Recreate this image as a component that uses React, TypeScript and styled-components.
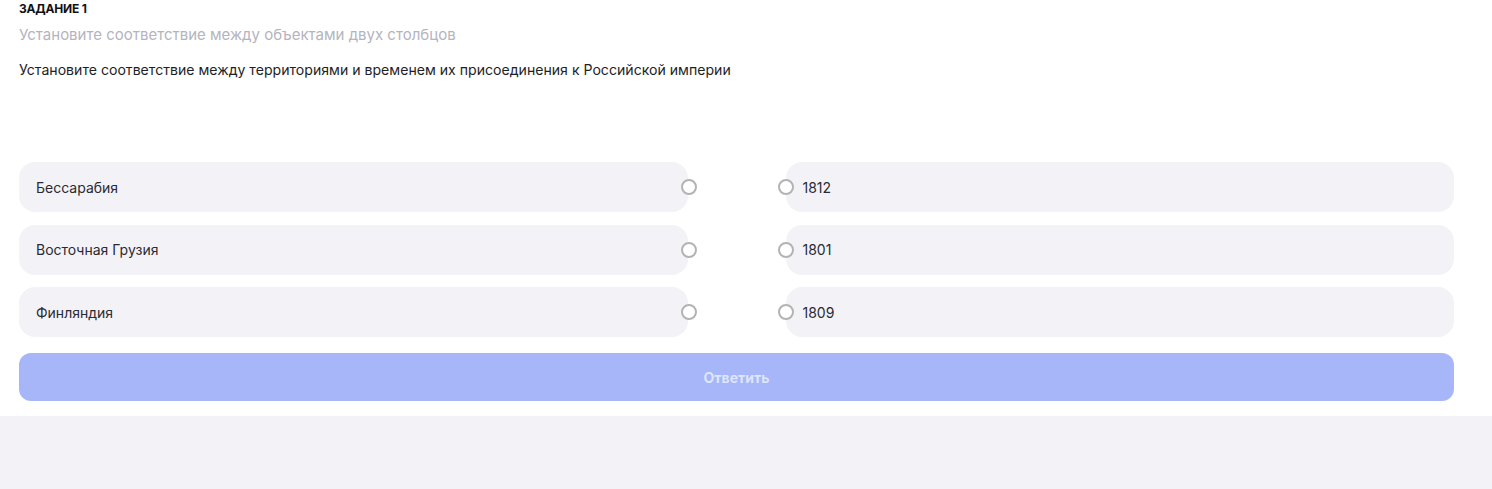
import React from "react";
import styled, { createGlobalStyle } from "styled-components";

const Global = createGlobalStyle`
  html, body { margin: 0; padding: 0; background: #f3f3f7; }
  body { font-family: Inter, "Noto Sans", sans-serif; }
`;

const Page = styled.div`
  min-height: 100vh;
  background: #f3f3f7;
`;

const Panel = styled.section`
  background: #ffffff;
  padding: 2px 38px 15px 19px;
`;

const Label = styled.div`
  font-size: 12px;
  font-weight: 700;
  line-height: 14px;
  color: #111114;
  letter-spacing: -0.2px;
`;

const Hint = styled.div`
  margin-top: 10px;
  font-size: 15px;
  line-height: 18px;
  color: #b4b4be;
`;

const Question = styled.div`
  margin-top: 17px;
  font-size: 14.1px;
  line-height: 18px;
  color: #1e1e26;
`;

const Grid = styled.div`
  margin-top: 83px;
  display: grid;
  grid-template-columns: 1fr 1fr;
  column-gap: 98px;
  row-gap: 12.5px;
`;

const Item = styled.div`
  position: relative;
  height: 50px;
  border-radius: 16px;
  background: #f3f3f7;
  display: flex;
  align-items: center;
  padding: 0 17px;
  font-size: 14px;
  color: #2a2a33;
`;

const Dot = styled.span<{ $side: "left" | "right" }>`
  position: absolute;
  top: 50%;
  ${(p) => (p.$side === "left" ? "right: -9px;" : "left: -8px;")}
  width: 12px;
  height: 12px;
  margin-top: -8px;
  border: 2px solid #b3b3b3;
  border-radius: 50%;
  background: #ffffff;
`;

const Button = styled.button`
  margin-top: 16px;
  width: 100%;
  height: 48px;
  border: none;
  border-radius: 12px;
  background: #a6b6f9;
  color: #dfe5fe;
  font-family: Inter, "Noto Sans", sans-serif;
  font-size: 14px;
  font-weight: 700;
  cursor: pointer;
`;

const left = ["Бессарабия", "Восточная Грузия", "Финляндия"];
const right = ["1812", "1801", "1809"];

export default function App() {
  return (
    <Page>
      <Global />
      <Panel>
        <Label>ЗАДАНИЕ 1</Label>
        <Hint>Установите соответствие между объектами двух столбцов</Hint>
        <Question>
          Установите соответствие между территориями и временем их присоединения к Российской империи
        </Question>
        <Grid>
          {left.map((l, i) => (
            <React.Fragment key={i}>
              <Item>
                {l}
                <Dot $side="left" />
              </Item>
              <Item>
                <Dot $side="right" />
                {right[i]}
              </Item>
            </React.Fragment>
          ))}
        </Grid>
        <Button>Ответить</Button>
      </Panel>
    </Page>
  );
}
